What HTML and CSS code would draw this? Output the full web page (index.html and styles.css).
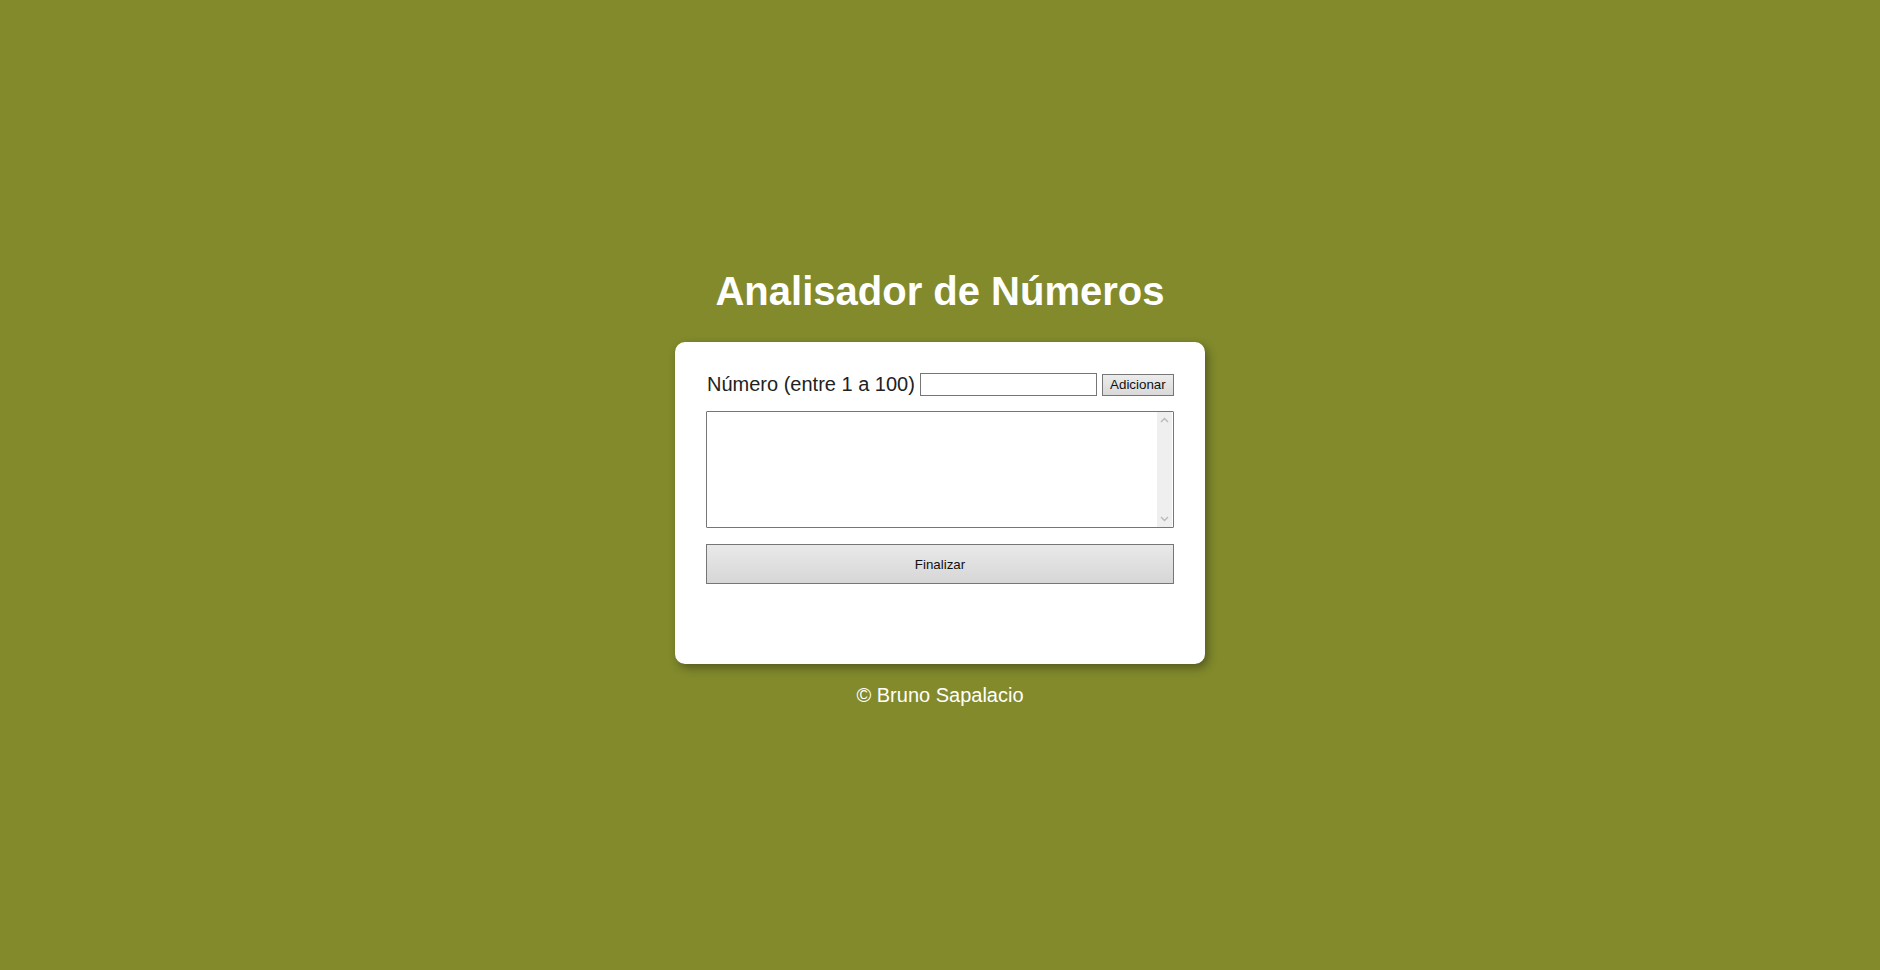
FILE: index.html
```html
<!DOCTYPE html>
<html lang="pt-BR">
<head>
<meta charset="utf-8">
<title>Analisador de Números</title>
<link rel="stylesheet" href="styles.css">
</head>
<body>
<main class="page">
  <h1 class="title">Analisador de Números</h1>
  <section class="card">
    <div class="row">
      <label class="label" for="num">Número (entre 1 a 100)</label>
      <input class="field" type="number" id="num">
      <button class="btn btn-add" type="button">Adicionar</button>
    </div>
    <div class="listbox">
      <textarea class="list" aria-label="Lista"></textarea>
      <div class="scrollbar">
        <svg class="chev" width="9" height="6" viewBox="0 0 9 6"><path d="M1 5 L4.5 1.5 L8 5" fill="none" stroke="#b9b9b9" stroke-width="1.4"/></svg>
        <svg class="chev" width="9" height="6" viewBox="0 0 9 6"><path d="M1 1 L4.5 4.5 L8 1" fill="none" stroke="#b9b9b9" stroke-width="1.4"/></svg>
      </div>
    </div>
    <button class="btn btn-finish" type="button">Finalizar</button>
    <div class="result"></div>
  </section>
  <footer class="footer">© Bruno Sapalacio</footer>
</main>
</body>
</html>
```

FILE: styles.css
```css
* { box-sizing: border-box; }

html, body {
  margin: 0;
  padding: 0;
}

body {
  background: #828a2c;
  font-family: "Liberation Sans", Arial, sans-serif;
  color: #222;
}

.page {
  min-height: 100vh;
  display: flex;
  flex-direction: column;
  align-items: center;
  justify-content: center;
  padding-top: 5px;
}

.title {
  margin: 0;
  color: #fff;
  font-size: 40px;
  font-weight: bold;
  line-height: 46px;
}

.card {
  margin-top: 28px;
  width: 530px;
  padding: 31px 31px 0;
  height: 322px;
  background: #fff;
  border-radius: 10px;
  box-shadow: 3px 4px 10px rgba(0, 0, 0, 0.35);
}

.row {
  display: flex;
  align-items: center;
  gap: 5px;
  height: 23px;
}

.label {
  font-size: 20px;
  color: #222;
  margin-left: 1px;
  white-space: nowrap;
}

.field {
  width: 177px;
  height: 23px;
  border: 1px solid #767676;
  padding: 1px 2px;
  font: 13.33px "Liberation Sans", Arial, sans-serif;
  background: #fff;
  -moz-appearance: textfield;
}

.field::-webkit-outer-spin-button,
.field::-webkit-inner-spin-button {
  -webkit-appearance: none;
  margin: 0;
}

.btn {
  font: 13.33px "Liberation Sans", Arial, sans-serif;
  color: #111;
  border: 1px solid #767676;
  background: linear-gradient(#ececec, #d9d9d9);
  padding: 0 6px;
  cursor: pointer;
}

.btn-add {
  width: 72px;
  height: 22px;
  margin-top: 0;
}

.listbox {
  margin-top: 15px;
  display: flex;
  height: 117px;
  border: 1px solid #767676;
  border-radius: 1px;
  background: #fff;
}

.list {
  flex: 1;
  border: none;
  resize: none;
  outline: none;
  overflow: hidden;
  font: 13.33px "Liberation Mono", monospace;
  padding: 2px;
}

.scrollbar {
  width: 15px;
  margin: 0 1px 0 0;
  background: #efefef;
  display: flex;
  flex-direction: column;
  justify-content: space-between;
  align-items: center;
  padding: 5px 0 5px;
}

.chev { display: block; }

.btn-finish {
  display: block;
  width: 100%;
  height: 40px;
  margin-top: 16px;
  background: linear-gradient(#e9e9e9, #d6d6d6);
}

.footer {
  margin-top: 20px;
  color: #fff;
  font-size: 20px;
  line-height: 23px;
}
```
